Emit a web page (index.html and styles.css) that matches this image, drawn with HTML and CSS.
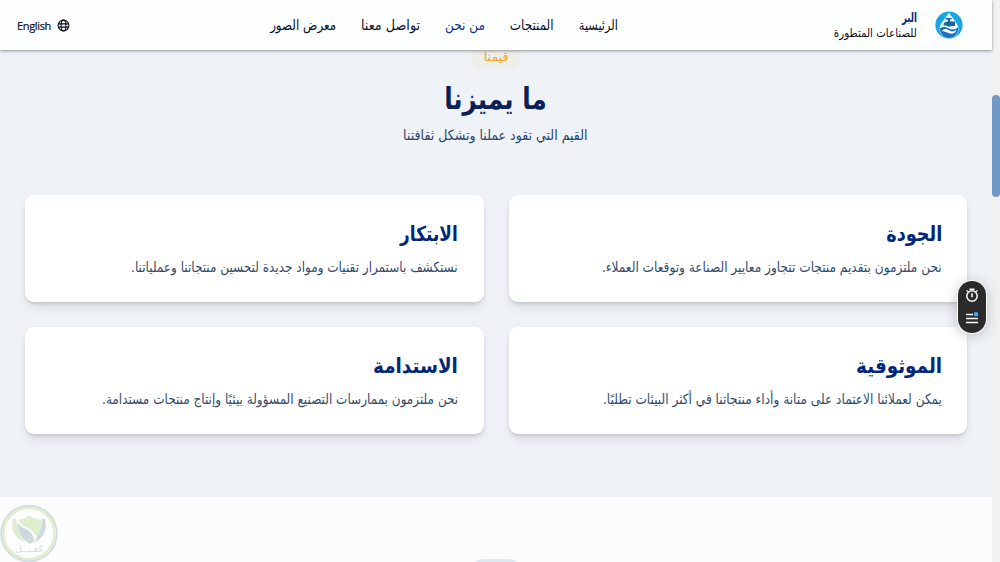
FILE: index.html
```html
<!DOCTYPE html>
<html lang="ar">
<head>
<meta charset="utf-8">
<title>البر للصناعات المتطورة</title>
<link rel="stylesheet" href="styles.css">
</head>
<body>
<div class="page" dir="rtl">
  <header class="topbar">
    <a class="brand">
      <svg class="brand-logo" viewBox="0 0 28 28">
        <circle cx="14" cy="14" r="13.600" fill="#18a5e2"/>
        <path d="M14 1.500C11.500 6.500 4.500 12 4.500 18.500a9.500 8.500 0 0 0 19 0C23.500 12 16.500 6.500 14 1.500z" fill="#e9f6fc"/>
        <path d="M5 17.500c3-2.500 6-1.500 9 0s6 1 9-1c1 6-4 10.500-9 10.500S4.500 23 5 17.500z" fill="#1b74bb"/>
        <path d="M8.500 14.500c0-3 1.500-4 4.500-4V8.500h-2.500V7h6v1.500H15v2h5v4.500h-3.500c-2 1-4 .5-5-.5z" fill="#17639f"/>
        <path d="M7 20c2.500-3 5-2 7.500-.5S19 21 21.500 18c-.5 4-3.500 5.500-7 4.200S9 20.500 7 20z" fill="#fff"/>
      </svg>
      <span class="brand-text"><b class="brand-name"><i class="fit">البر</i></b><span class="brand-sub"><i class="fit">للصناعات المتطورة</i></span></span>
    </a>
    <nav class="nav">
      <a class="w-home"><i class="fit">الرئيسية</i></a>
      <a class="w-products"><i class="fit">المنتجات</i></a>
      <a class="w-about active"><i class="fit">من نحن</i></a>
      <a class="w-contact"><i class="fit">تواصل معنا</i></a>
      <a class="w-gallery"><i class="fit">معرض الصور</i></a>
    </nav>
    <a class="lang">
      <svg class="globe" viewBox="0 0 24 24"><circle cx="12" cy="12" r="10"/><ellipse cx="12" cy="12" rx="4.500" ry="10"/><path d="M2 9h20M2 15h20"/></svg>
      <span class="lang-label">English</span>
    </a>
  </header>
  <section class="values">
    <span class="pill"><i class="fit">قيمنا</i></span>
    <h2 class="title"><i class="fit">ما يميزنا</i></h2>
    <p class="subtitle"><i class="fit">القيم التي تقود عملنا وتشكل ثقافتنا</i></p>
    <div class="cards">
      <article class="card"><h3 class="t-quality"><i class="fit">الجودة</i></h3><p class="p-quality"><i class="fit">نحن ملتزمون بتقديم منتجات تتجاوز معايير الصناعة وتوقعات العملاء.</i></p></article>
      <article class="card"><h3 class="t-innov"><i class="fit">الابتكار</i></h3><p class="p-innov"><i class="fit">نستكشف باستمرار تقنيات ومواد جديدة لتحسين منتجاتنا وعملياتنا.</i></p></article>
      <article class="card"><h3 class="t-trust"><i class="fit">الموثوقية</i></h3><p class="p-trust"><i class="fit">يمكن لعملائنا الاعتماد على متانة وأداء منتجاتنا في أكثر البيئات تطلبًا.</i></p></article>
      <article class="card"><h3 class="t-sustain"><i class="fit">الاستدامة</i></h3><p class="p-sustain"><i class="fit">نحن ملتزمون بممارسات التصنيع المسؤولة بيئيًا وإنتاج منتجات مستدامة.</i></p></article>
    </div>
  </section>
  <section class="next"><span class="next-pill"></span></section>
</div>
<div class="scrollbar"><div class="thumb"></div></div>
<div class="widget">
  <svg viewBox="0 0 28 52">
    <g fill="none" stroke="#fff" stroke-width="1.500"><circle cx="14" cy="15" r="5.200"/><path d="M11.500 8.300h5M14 12.300v4M18 10.500l1.500-1M10 10.500l-1.500-1"/></g>
    <path d="M8 33.500h7M8 37.500h12M8 41.500h12" stroke="#fff" stroke-width="1.300"/>
    <circle cx="18" cy="33.300" r="2.300" fill="#45a6f5"/>
  </svg>
</div>
<div class="badge">
  <svg viewBox="0 0 58 58">
    <circle cx="29" cy="28.500" r="27.800" fill="#fcfdfc" stroke="#d3dddf" stroke-width="2"/>
    <circle cx="29" cy="28.500" r="25.600" fill="none" stroke="#e0edcf" stroke-width="2.400"/>
    <path d="M18 15q7-1 11-4.500 5 3.500 12 4.500v5q0 8-4 13-3-7-9-10-7-3-10-8z" fill="#dfecce"/>
    <path d="M17 17q3 5 9 7 8 4 8 12-2 2-4 3-12-6-13-22z" fill="#cdd9dd"/>
    <path d="M13 14q-4 17 13 24-9-8-10-24z" fill="#dfecce"/>
    <path d="M45 14q4 17-12 24 8-8 9-24z" fill="#cdd9dd"/>
    <text x="29" y="47" text-anchor="middle" class="badge-text" textLength="28" lengthAdjust="spacingAndGlyphs">كفـيــل</text>
  </svg>
</div>
</body>
</html>
```
FILE: styles.css
```css
* { box-sizing: border-box; }
body { margin: 0; display: flex; height: 562px; overflow: hidden; background: #eff3f8; font-family: "DejaVu Sans", sans-serif; }
h2, h3, p { margin: 0; }
i { font-style: normal; }
.page { width: 992px; height: 562px; display: flex; flex-direction: column; }
.topbar { height: 50px; flex: none; background: #fdfefe; box-shadow: 0 1px 3px rgba(0,0,0,.4); display: grid; grid-template-columns: 374px 1fr 255px; align-items: center; z-index: 1; color: #0b0f1f; }
.brand { display: flex; align-items: center; gap: 18px; padding-right: 29px; }
.brand-logo { width: 28px; height: 28px; }
.brand-text { display: flex; flex-direction: column; font-size: 11px; line-height: 16px; padding-top: 2px; }
.brand-name { color: #0b2a78; font-size: 12px; font-weight: 600; }

.fit { display: inline-block; white-space: nowrap; transform-origin: right center; transform: scale(var(--sx, 1), var(--sy, 1.1)); }
.brand-name { --sx: .72; }
.brand-sub { --sx: .935; }
.w-home { --sx: .87; width: 39px; }
.w-products { --sx: .92; width: 44px; }
.w-about { --sx: .93; width: 40px; }
.w-contact { --sx: .985; width: 59px; }
.w-gallery { --sx: .915; width: 66px; }
.pill { --sx: 1.15; }
.title { --sx: .91; }
.subtitle { --sx: .968; }
.t-quality { --sx: .93; }
.p-quality { --sx: .934; }
.t-innov { --sx: .89; }
.p-innov { --sx: .926; }
.t-trust { --sx: .966; }
.p-trust { --sx: .934; }
.t-sustain { --sx: .965; }
.p-sustain { --sx: .927; }

.nav { display: flex; gap: 25px; font-size: 13px; white-space: nowrap; }
.nav .active { color: #0b2f86; }
.lang { display: flex; align-items: center; justify-content: flex-end; gap: 6px; padding-left: 17px; font: 11px "Open Sans", sans-serif; color: #0b0f1f; }
.lang-label { letter-spacing: -.35px; -webkit-text-stroke: .2px; }
.globe { width: 13px; height: 13px; fill: none; stroke: #0b0f1f; stroke-width: 2; }
.values { height: 447px; flex: none; display: flex; flex-direction: column; align-items: center; }
.pill { width: 50px; height: 24px; margin-top: -4px; border-radius: 12px; background: #f0eee9; color: #e9a62c; font-size: 11px; line-height: 24px; padding-right: 12px; }
.title { margin-top: 9px; font-size: 27px; line-height: 40px; color: #0a2158; width: 102px; }
.subtitle { margin-top: 7px; font-size: 13px; line-height: 20px; color: #2b4468; width: 184px; }
.cards { width: 942px; margin-top: 49px; display: grid; grid-template-columns: 458px 459px; gap: 25px; }
.card { height: 107px; background: #fff; border-radius: 9px; padding: 23px 25px; box-shadow: 0 8px 12px -3px rgba(0,0,0,.1), 0 2px 4px -1px rgba(0,0,0,.16); }
.card:nth-child(even) { padding-right: 26px; }
.card h3 { font-size: 19px; line-height: 30px; color: #032777; }
.card p { margin-top: 9px; font-size: 13px; line-height: 22px; color: #334b6b; }
.next { flex: 1; background: #fcfcfc; display: flex; justify-content: center; align-items: flex-end; overflow: hidden; }
.next-pill { width: 50px; height: 24px; border-radius: 12px; background: #e0e6f0; margin-bottom: -21px; }
.scrollbar { width: 8px; height: 562px; padding-top: 95px; background: #f1f1f1; }
.thumb { height: 102px; border-radius: 4px; background: #7198c5; }
.widget { position: absolute; left: 958px; top: 281px; width: 28px; height: 52px; border-radius: 14px; background: #2b2b2b; box-shadow: 0 0 0 1px #fff, 0 2px 14px rgba(0,0,0,.25); z-index: 2; }
.widget svg, .badge svg { display: block; width: 100%; height: 100%; }
.badge { position: absolute; left: 0; top: 505px; width: 58px; height: 58px; }
.badge-text { font-size: 9px; fill: #d3dde0; }
```
